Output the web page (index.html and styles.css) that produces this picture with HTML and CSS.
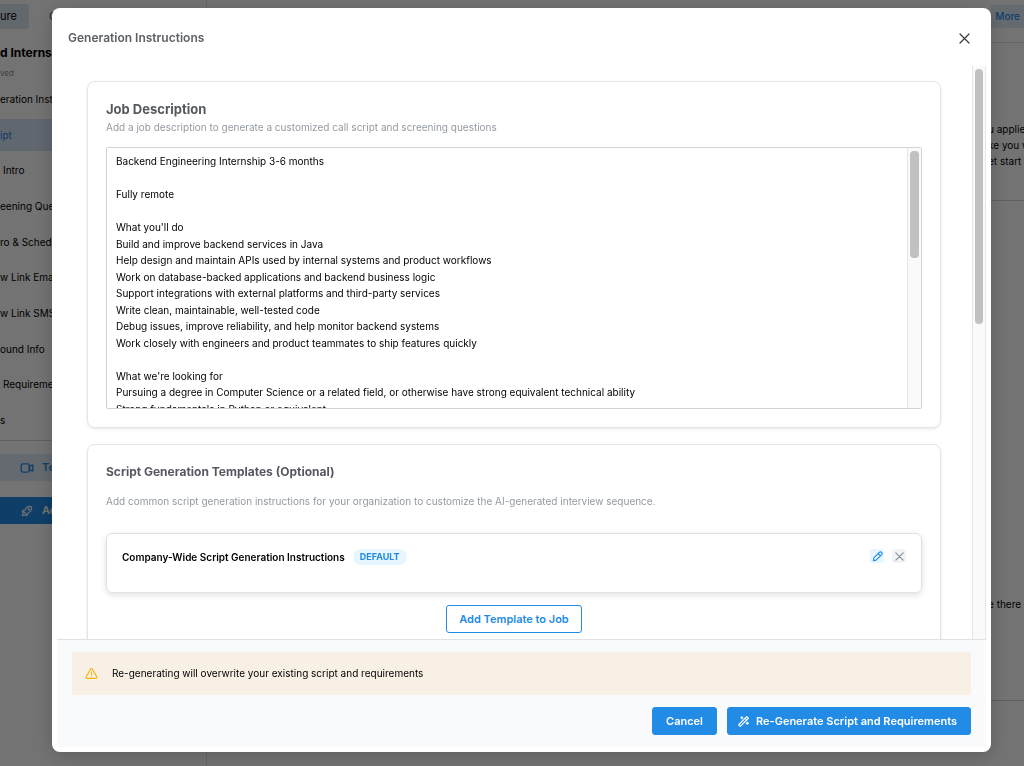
FILE: index.html
```html
<!DOCTYPE html>
<html lang="en">
<head>
  <meta charset="UTF-8">
  <meta name="viewport" content="width=device-width, initial-scale=1.0">
  <title>Generation Instructions</title>
  <link rel="stylesheet" href="styles.css">
</head>
<body>
  <div class="app">
    <aside class="sidebar">
      <div class="tabs">
        <button class="tab active" type="button">ure</button>
        <button class="tab" type="button">Candidates</button>
      </div>
      <h1 class="job-title">d Internship</h1>
      <p class="saved">ved</p>
      <nav class="steps">
        <a href="#">eration Instructions</a>
        <a href="#" class="current">ipt</a>
        <a href="#" class="indent">Intro</a>
        <a href="#">eening Questions</a>
        <a href="#">ro &amp; Scheduling</a>
        <a href="#">w Link Email</a>
        <a href="#">w Link SMS</a>
        <a href="#">ound Info</a>
        <a href="#" class="indent">Requirements</a>
        <a href="#">s</a>
      </nav>
      <div class="side-actions">
        <button class="side-btn light" type="button">
          <svg width="14" height="14" viewBox="0 0 24 24" fill="none" stroke="currentColor" stroke-width="2.4" stroke-linecap="round" stroke-linejoin="round"><rect x="2" y="5" width="14" height="14" rx="3"/><path d="M16 10l4-2.500a1 1 0 0 1 2 1v7a1 1 0 0 1-2 1L16 14z"/></svg>
          Test
        </button>
        <button class="side-btn solid" type="button">
          <svg width="14" height="14" viewBox="0 0 24 24" fill="none" stroke="currentColor" stroke-width="2" stroke-linecap="round" stroke-linejoin="round"><path d="M4 13a8 8 0 0 1 7 7a6 6 0 0 0 3-5a9 9 0 0 0 6-8a3 3 0 0 0-3-3a9 9 0 0 0-8 6a6 6 0 0 0-5 3"/><path d="M7 14a6 6 0 0 0-3 6a6 6 0 0 0 6-3"/><circle cx="15" cy="9" r="1"/></svg>
          Activate
        </button>
      </div>
    </aside>
    <main class="preview">
      <header class="preview-bar"><button class="more" type="button">More</button></header>
      <section class="preview-block">
        <p>u applie</p>
        <p>ke you w</p>
        <p>et start</p>
      </section>
      <section class="preview-block reply"><p>e there</p></section>
    </main>
  </div>

  <div class="overlay">
    <div class="modal" role="dialog" aria-modal="true" aria-labelledby="modalTitle">
      <header class="modal-header">
        <h2 id="modalTitle">Generation Instructions</h2>
        <button class="close" type="button" aria-label="Close">
          <svg width="11" height="11" viewBox="0 0 11 11" fill="none" stroke="currentColor" stroke-width="1.2" stroke-linecap="round"><path d="M1 1l9 9M10 1l-9 9"/></svg>
        </button>
      </header>

      <div class="modal-body">
        <div class="modal-content">
          <section class="card">
            <h3><label for="jobDescription">Job Description</label></h3>
            <p class="hint">Add a job description to generate a customized call script and screening questions</p>
            <div class="textbox">
              <textarea id="jobDescription" spellcheck="false">Backend Engineering Internship 3-6 months

Fully remote

What you'll do
Build and improve backend services in Java
Help design and maintain APIs used by internal systems and product workflows
Work on database-backed applications and backend business logic
Support integrations with external platforms and third-party services
Write clean, maintainable, well-tested code
Debug issues, improve reliability, and help monitor backend systems
Work closely with engineers and product teammates to ship features quickly

What we're looking for
Pursuing a degree in Computer Science or a related field, or otherwise have strong equivalent technical ability
Strong fundamentals in Python or equivalent</textarea>
              <div class="track"><div class="thumb thumb-text"></div></div>
            </div>
          </section>

          <section class="card templates">
            <h3>Script Generation Templates (Optional)</h3>
            <p class="hint">Add common script generation instructions for your organization to customize the AI-generated interview sequence.</p>
            <div class="template">
              <span class="template-name">Company-Wide Script Generation Instructions</span>
              <span class="badge">DEFAULT</span>
              <div class="template-actions">
                <button class="icon-btn edit" type="button" aria-label="Edit template">
                  <svg width="11" height="11" viewBox="0 0 24 24" fill="none" stroke="currentColor" stroke-width="2.4" stroke-linecap="round" stroke-linejoin="round"><path d="M3 21l1-6L16 3a3.500 3.500 0 0 1 5 5L9 20z"/><path d="M14 6l4 4"/></svg>
                </button>
                <button class="icon-btn remove" type="button" aria-label="Remove template">
                  <svg width="11" height="11" viewBox="0 0 24 24" fill="none" stroke="currentColor" stroke-width="2.4" stroke-linecap="round"><path d="M4 4l16 16M20 4L4 20"/></svg>
                </button>
              </div>
            </div>
            <button class="btn outline" type="button">Add Template to Job</button>
          </section>
        </div>
        <div class="track"><div class="thumb thumb-body"></div></div>
      </div>

      <footer class="modal-footer">
        <div class="alert" role="alert">
          <svg width="13" height="13" viewBox="0 0 24 24" fill="none" stroke="currentColor" stroke-width="2" stroke-linecap="round" stroke-linejoin="round"><path d="M10.300 4L2.300 17.800A2 2 0 0 0 4 21h16a2 2 0 0 0 1.700-3.200L13.700 4a2 2 0 0 0-3.400 0z"/><path d="M12 9v5M12 17v.1"/></svg>
          Re-generating will overwrite your existing script and requirements
        </div>
        <div class="actions">
          <button class="btn" type="button">Cancel</button>
          <button class="btn with-icon" type="button">
            <svg width="13" height="13" viewBox="0 0 24 24" fill="none" stroke="currentColor" stroke-width="2" stroke-linecap="round" stroke-linejoin="round"><path d="M6 21L21 6l-3-3L3 18z"/><path d="M15 6l3 3"/><path d="M9 3a2 2 0 0 0 2 2a2 2 0 0 0-2 2a2 2 0 0 0-2-2a2 2 0 0 0 2-2"/><path d="M19 13a2 2 0 0 0 2 2a2 2 0 0 0-2 2a2 2 0 0 0-2-2a2 2 0 0 0 2-2"/></svg>
            Re-Generate Script and Requirements
          </button>
        </div>
      </footer>
    </div>
  </div>
</body>
</html>
```
FILE: styles.css
```css
* {
  box-sizing: border-box;
}

body {
  margin: 0;
  font-family: Inter, "Liberation Sans", sans-serif;
  font-size: 10px;
  line-height: 1.65;
  color: #000;
  background: #fff;
}

h1, h2, h3, p {
  margin: 0;
}

button {
  font: inherit;
  border: none;
  cursor: pointer;
}

svg {
  display: block;
  flex: none;
}

/* Page behind the dialog */
.app {
  display: flex;
  height: 100vh;
  overflow: hidden;
}

.sidebar {
  width: 207px;
  flex: none;
  border-right: 1px solid #dee2e6;
  white-space: nowrap;
}

.tabs {
  display: flex;
  gap: 8px;
  padding-top: 4px;
}

.tab {
  height: 25px;
  padding: 0 12px;
  font-size: 11px;
  background: none;
  color: #495057;
}

.tab.active {
  padding-left: 0;
  border-radius: 0 4px 4px 0;
  background: #dce6f2;
  color: #000;
}

.job-title {
  margin-top: 14px;
  font-size: 12px;
  line-height: 20px;
  font-weight: 700;
}

.saved {
  padding-top: 4px;
  font-size: 8px;
  line-height: 12px;
  color: #868e96;
}

.steps {
  display: flex;
  flex-direction: column;
  justify-content: space-between;
  height: 353px;
  margin-top: 4px;
}

.steps a {
  padding: 8px 0;
  line-height: 16px;
  color: #000;
  text-decoration: none;
}

.steps a.current {
  background: #d7e4f5;
  color: #1c7ed6;
}

.steps a.indent {
  padding-left: 3px;
}

.side-actions {
  display: flex;
  flex-direction: column;
  gap: 16px;
  margin-top: 4px;
  padding-top: 13px;
  border-top: 1px solid #ced4da;
}

.side-btn {
  display: flex;
  align-items: center;
  gap: 8px;
  height: 27px;
  padding: 0 20px;
  font-size: 11px;
  font-weight: 600;
}

.side-btn.light {
  background: #e1ecf9;
  color: #228be6;
}

.side-btn.solid {
  background: #228be6;
  color: #fff;
}

.preview {
  flex: 1;
  min-width: 0;
}

.preview-bar {
  display: flex;
  justify-content: flex-end;
  height: 43px;
  padding-top: 5px;
  border-bottom: 1px solid #dee2e6;
}

.more {
  height: 23px;
  padding: 0 4px;
  font-weight: 500;
  background: #e1ecf9;
  color: #228be6;
}

.preview-block {
  display: flex;
  flex-direction: column;
  height: 158px;
  padding-top: 78px;
  border-bottom: 1px solid #ced4da;
}

.preview-block p {
  width: 36px;
  margin-left: auto;
  line-height: 16px;
  white-space: nowrap;
}

.preview-block.reply {
  height: 500px;
  padding-top: 395px;
}

/* Dialog */
.overlay {
  position: fixed;
  inset: 0;
  display: flex;
  padding: 8px 33px 14px 52px;
  background: rgba(0, 0, 0, 0.55);
}

.modal {
  display: flex;
  flex: 1;
  flex-direction: column;
  min-width: 0;
  padding: 0 5px 5px;
  border-radius: 8px;
  background: #fff;
  box-shadow: 0 4px 20px rgba(0, 0, 0, 0.2);
}

.modal-header {
  display: flex;
  align-items: center;
  justify-content: space-between;
  height: 58px;
  flex: none;
  padding: 2px 14px 0 11px;
}

.modal-header h2 {
  font-size: 12px;
  line-height: 18px;
  font-weight: 600;
  color: #5c6066;
}

.close {
  display: grid;
  place-items: center;
  width: 16px;
  height: 16px;
  padding: 0;
  background: none;
  color: #343a40;
}

.modal-body {
  display: flex;
  flex: 1;
  min-height: 0;
  overflow: hidden;
}

.modal-content {
  flex: 1;
  min-width: 0;
  padding: 15px 31px 16px 30px;
}

.card {
  padding: 18px;
  border: 1px solid #e3e5e8;
  border-radius: 8px;
  box-shadow: 0 1px 3px rgba(0, 0, 0, 0.1);
}

.card + .card {
  margin-top: 16px;
}

.card h3 {
  font-size: 13px;
  line-height: 18px;
  font-weight: 700;
  color: #55595f;
}

.hint {
  line-height: 18px;
  color: #939aa1;
}

.textbox {
  display: flex;
  height: 262px;
  margin-top: 11px;
  border: 1px solid #ced4da;
  border-radius: 2px;
}

.textbox textarea {
  flex: 1;
  min-width: 0;
  padding: 5px 9px;
  border: none;
  outline: none;
  resize: none;
  overflow: hidden;
  font: inherit;
  color: #000;
  background: none;
}

/* Scrollbars */
.track {
  width: 14px;
  flex: none;
  padding: 3px 2px;
  border: solid #e6e6e6;
  border-width: 0 1px;
  background: #fafafa;
}

.textbox .track {
  border-right: none;
}

.thumb {
  border-radius: 4px;
  background: #c1c1c1;
}

.thumb-body {
  height: 45%;
}

.thumb-text {
  height: 42%;
}

.templates {
  display: flex;
  flex-direction: column;
  padding-bottom: 60px;
}

.card.templates h3 {
  font-size: 12px;
}

.templates .hint {
  margin-top: 11px;
}

.template {
  display: flex;
  align-items: flex-start;
  gap: 8px;
  height: 60px;
  margin-top: 23px;
  padding: 15px;
  border: 1px solid #dee2e6;
  border-radius: 6px;
  box-shadow: 0 2px 6px rgba(0, 0, 0, 0.12);
}

.template-name {
  font-weight: 600;
}

.badge {
  padding: 0 7px;
  border-radius: 8px;
  font-size: 9px;
  line-height: 16px;
  font-weight: 700;
  background: #e7f5ff;
  color: #228be6;
}

.template-actions {
  display: flex;
  gap: 8px;
  margin-left: auto;
}

.icon-btn {
  display: grid;
  place-items: center;
  width: 14px;
  height: 14px;
  padding: 0;
  border-radius: 2px;
}

.icon-btn.edit {
  background: #e7f5ff;
  color: #228be6;
}

.icon-btn.remove {
  background: #f1f3f5;
  color: #868e96;
}

.btn {
  display: flex;
  align-items: center;
  height: 28px;
  padding: 0 13px;
  border: 1px solid #228be6;
  border-radius: 3px;
  font-size: 11px;
  font-weight: 600;
  background: #228be6;
  color: #fff;
}

.btn.outline {
  align-self: center;
  margin-top: 12px;
  padding: 0 12px;
  background: #fff;
  color: #228be6;
}

.btn.with-icon {
  gap: 6px;
  padding-left: 9px;
}

.modal-footer {
  flex: none;
  padding: 12px 15px;
  border-top: 1px solid #dee2e6;
  background: #f8fafc;
}

.alert {
  display: flex;
  align-items: center;
  gap: 14px;
  height: 43px;
  padding: 0 13px;
  background: #f8f0e5;
}

.alert svg {
  color: #fab005;
}

.actions {
  display: flex;
  justify-content: flex-end;
  gap: 10px;
  margin-top: 12px;
}
```
